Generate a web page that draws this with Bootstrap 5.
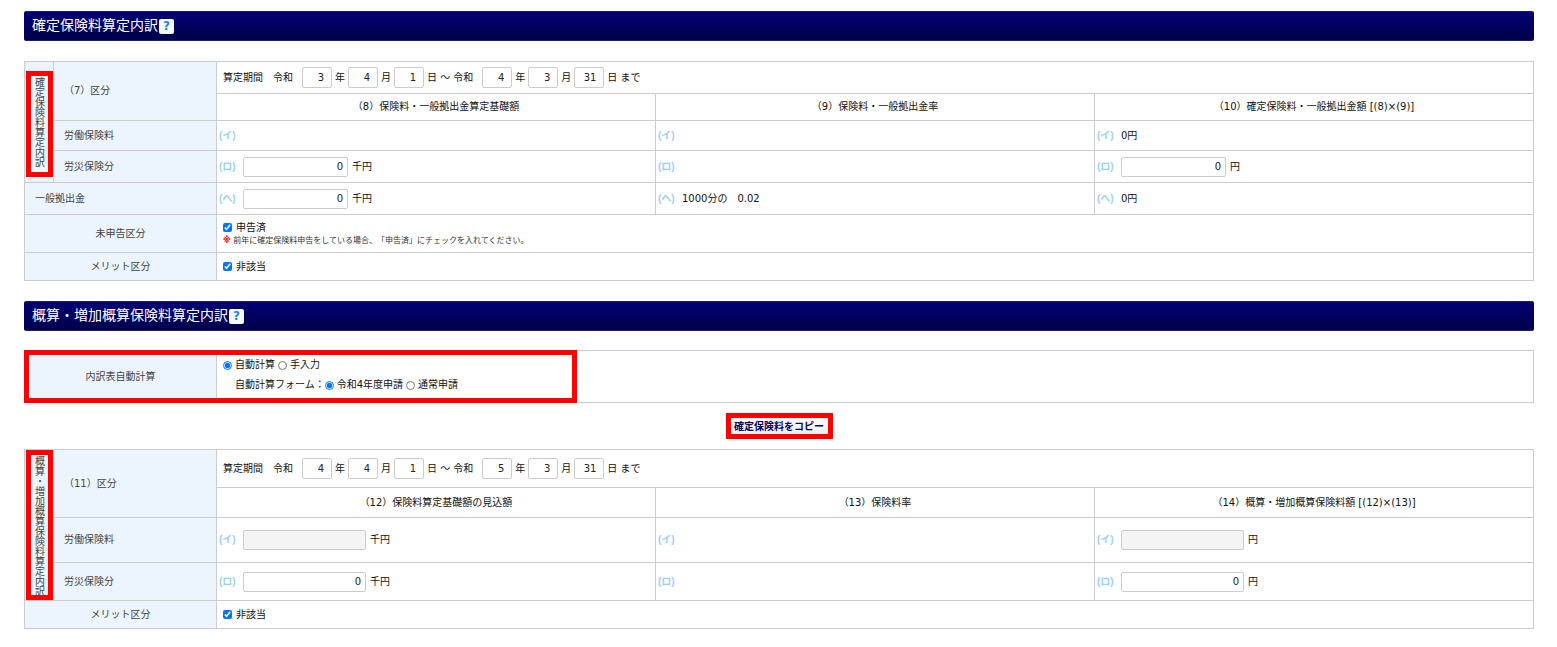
<!DOCTYPE html>
<html lang="ja">
<head>
<meta charset="utf-8">
<meta name="viewport" content="width=device-width, initial-scale=1">
<title>保険料算定内訳</title>
<link href="https://cdn.jsdelivr.net/npm/bootstrap@5.3.0/dist/css/bootstrap.min.css" rel="stylesheet">
<style>
  body { font: 10px/14px "DejaVu Sans", "Noto Sans CJK JP", sans-serif; color: #111; background: #fff; text-spacing-trim: space-all; }
  main { padding: 11px 23px 18px 24px; }
  .bar { height: 30px; padding: 0 8px 2px; gap: 1px; border-radius: 2px; background: linear-gradient(#000073, #00004b); border: 1px solid #1c1c6b; border-width: 1px 0; }
  .bar h2 { font-size: 14px; line-height: 20px; font-weight: 400; color: #fff; }
  .help { width: 15px; height: 15px; margin-top: 2px; border-radius: 2px; background: #f4f9fd; color: #2186d0; font-size: 12px; line-height: 15px; font-weight: 700; text-align: center; text-decoration: none; }
  .sheet { table-layout: fixed; color: #111; border-color: #ccc; --bs-table-color: #111; }
  .sheet > tbody > tr > * { padding: 0 6px; vertical-align: middle; font-weight: 400; }
  .sheet > tbody > tr > th[scope="row"] { background: #ecf5fd; color: #444; padding: 0 10px; }
  .sheet > tbody > tr > th[scope="col"] { text-align: center; }
  .sheet > tbody > tr > .amount { padding: 0 2px; }
  .sheet > tbody > tr > th.side[scope="row"] { padding: 0; height: 1px; }
  .c-side { width: 29px; } .c-name { width: 163px; } .c-head { width: 192px; }
  .h27 { height: 27px; } .h28 { height: 28px; } .h30 { height: 30px; } .h32 { height: 32px; }
  .h38 { height: 38px; } .h45 { height: 45px; } .h52 { height: 52px; }
  .frame { border: 5px solid #f00; }
  .upright { writing-mode: vertical-rl; width: 27px; margin: 0 auto; padding: 1px 0 5px; line-height: 17px; white-space: nowrap; text-align: start; }
  .mark-s { flex: none; width: 18px; margin-right: 6px; color: #9bcffb; font-family: "Liberation Sans", "Noto Sans CJK JP", sans-serif; font-weight: 700; white-space: nowrap; }
  .num { height: 20px; padding: 0 4px; border: 1px solid #ccc; border-radius: 2px; background: #fff; color: #222; font-size: 10px; line-height: 18px; text-align: right; }
  .num:disabled { background: #f4f4f4; }
  .num-m { width: 105px; margin-right: 4px; } .num-l { width: 123px; margin-right: 4px; }
  .num-s { width: 30px; padding: 0 7px 0 2px; height: 21px; }
  .period { gap: 3px; white-space: nowrap; }
  .era { margin-right: 6px; }
  .tick { width: 9px; height: 9px; margin: 0; accent-color: #0075ff; }
  .opt { gap: 4px; }
  .choices { gap: 3px; line-height: 20px; }
  .choices .opt { gap: 3px; }
  .note { font-size: 8px; line-height: 12px; color: #333; }
  .note b { color: #f00; }
  .auto-form { margin: 0 0 3px 12px; }
  .overlay { inset: 0 auto 0 0; width: 553px; pointer-events: none; }
  .copy { height: 26px; width: 107px; padding: 0; background: linear-gradient(#fff, #eee); color: #006; font-size: 10px; line-height: 15px; font-weight: 700; white-space: nowrap; }
  .gap-t { margin-top: 20px; } .gap-s { margin-top: 19px; } .gap-b { margin: 10px 0; }
</style>
</head>
<body>
<main>
  <section>
    <div class="bar d-flex align-items-center"><h2 class="m-0">確定保険料算定内訳</h2><a href="#" class="help">?</a></div>
    <table class="table table-bordered sheet gap-t mb-0">
      <colgroup><col class="c-side"><col class="c-name"><col><col><col></colgroup>
      <tbody>
        <tr class="h32"><th scope="row" class="side" rowspan="4"><div class="upright frame mt-1">確定保険料算定内訳</div></th>
          <th scope="row" rowspan="2">（7）区分</th>
          <td colspan="3"><div class="period d-flex align-items-center"><span class="era">算定期間　令和</span>
            <input class="num num-s" value="3" aria-label="開始年"><span>年</span><input class="num num-s" value="4" aria-label="開始月"><span>月</span><input class="num num-s" value="1" aria-label="開始日"><span class="era">日 ～ 令和</span>
            <input class="num num-s" value="4" aria-label="終了年"><span>年</span><input class="num num-s" value="3" aria-label="終了月"><span>月</span><input class="num num-s" value="31" aria-label="終了日"><span>日 まで</span></div></td></tr>
        <tr class="h27"><th scope="col">（8）保険料・一般拠出金算定基礎額</th><th scope="col">（9）保険料・一般拠出金率</th><th scope="col">（10）確定保険料・一般拠出金額 [(8)×(9)]</th></tr>
        <tr class="h30"><th scope="row">労働保険料</th>
          <td class="amount"><div class="d-flex"><span class="mark-s">(イ)</span></div></td>
          <td class="amount"><div class="d-flex"><span class="mark-s">(イ)</span></div></td>
          <td class="amount"><div class="d-flex"><span class="mark-s">(イ)</span>0円</div></td></tr>
        <tr class="h32"><th scope="row">労災保険分</th>
          <td class="amount"><div class="d-flex align-items-center"><span class="mark-s">(ロ)</span><input class="num num-m" value="0" aria-label="労災保険分 算定基礎額">千円</div></td>
          <td class="amount"><div class="d-flex"><span class="mark-s">(ロ)</span></div></td>
          <td class="amount"><div class="d-flex align-items-center"><span class="mark-s">(ロ)</span><input class="num num-m" value="0" aria-label="労災保険分 確定保険料">円</div></td></tr>
        <tr class="h32"><th scope="row" colspan="2">一般拠出金</th>
          <td class="amount"><div class="d-flex align-items-center"><span class="mark-s">(ヘ)</span><input class="num num-m" value="0" aria-label="一般拠出金 算定基礎額">千円</div></td>
          <td class="amount"><div class="d-flex"><span class="mark-s">(ヘ)</span>1000分の　0.02</div></td>
          <td class="amount"><div class="d-flex"><span class="mark-s">(ヘ)</span>0円</div></td></tr>
        <tr class="h38"><th scope="row" colspan="2" class="text-center">未申告区分</th>
          <td colspan="3"><label class="opt d-flex align-items-center"><input type="checkbox" class="tick" checked>申告済</label>
            <div class="note"><b>※</b> 前年に確定保険料申告をしている場合、「申告済」にチェックを入れてください。</div></td></tr>
        <tr class="h28"><th scope="row" colspan="2" class="text-center">メリット区分</th>
          <td colspan="3"><label class="opt d-flex align-items-center"><input type="checkbox" class="tick" checked>非該当</label></td></tr>
      </tbody>
    </table>
  </section>

  <section class="gap-t">
    <div class="bar d-flex align-items-center"><h2 class="m-0">概算・増加概算保険料算定内訳</h2><a href="#" class="help">?</a></div>
    <div class="position-relative gap-s">
      <table class="table table-bordered sheet mb-0">
        <colgroup><col class="c-head"><col></colgroup>
        <tbody>
          <tr class="h52"><th scope="row" class="text-center">内訳表自動計算</th>
            <td><div class="choices d-flex"><label class="opt d-flex align-items-center"><input type="radio" name="calc" class="tick" checked>自動計算</label><label class="opt d-flex align-items-center"><input type="radio" name="calc" class="tick">手入力</label></div>
              <div class="choices auto-form d-flex"><div class="d-flex"><span>自動計算フォーム：</span><label class="opt d-flex align-items-center"><input type="radio" name="form" class="tick" checked>令和4年度申請</label></div><label class="opt d-flex align-items-center"><input type="radio" name="form" class="tick">通常申請</label></div></td></tr>
        </tbody>
      </table>
      <div class="overlay frame position-absolute"></div>
    </div>
    <div class="d-flex justify-content-center gap-b"><button type="button" class="copy frame">確定保険料をコピー</button></div>
    <table class="table table-bordered sheet mb-0">
      <colgroup><col class="c-side"><col class="c-name"><col><col><col></colgroup>
      <tbody>
        <tr class="h38"><th scope="row" class="side" rowspan="4"><div class="upright frame h-100">概算・増加概算保険料算定内訳</div></th>
          <th scope="row" rowspan="2">（11）区分</th>
          <td colspan="3"><div class="period d-flex align-items-center"><span class="era">算定期間　令和</span>
            <input class="num num-s" value="4" aria-label="概算 開始年"><span>年</span><input class="num num-s" value="4" aria-label="概算 開始月"><span>月</span><input class="num num-s" value="1" aria-label="概算 開始日"><span class="era">日 ～ 令和</span>
            <input class="num num-s" value="5" aria-label="概算 終了年"><span>年</span><input class="num num-s" value="3" aria-label="概算 終了月"><span>月</span><input class="num num-s" value="31" aria-label="概算 終了日"><span>日 まで</span></div></td></tr>
        <tr class="h30"><th scope="col">（12）保険料算定基礎額の見込額</th><th scope="col">（13）保険料率</th><th scope="col">（14）概算・増加概算保険料額 [(12)×(13)]</th></tr>
        <tr class="h45"><th scope="row">労働保険料</th>
          <td class="amount"><div class="d-flex align-items-center"><span class="mark-s">(イ)</span><input class="num num-l" disabled aria-label="労働保険料 見込額">千円</div></td>
          <td class="amount"><div class="d-flex"><span class="mark-s">(イ)</span></div></td>
          <td class="amount"><div class="d-flex align-items-center"><span class="mark-s">(イ)</span><input class="num num-l" disabled aria-label="労働保険料 概算保険料">円</div></td></tr>
        <tr class="h38"><th scope="row">労災保険分</th>
          <td class="amount"><div class="d-flex align-items-center"><span class="mark-s">(ロ)</span><input class="num num-l" value="0" aria-label="労災保険分 見込額">千円</div></td>
          <td class="amount"><div class="d-flex"><span class="mark-s">(ロ)</span></div></td>
          <td class="amount"><div class="d-flex align-items-center"><span class="mark-s">(ロ)</span><input class="num num-l" value="0" aria-label="労災保険分 概算保険料">円</div></td></tr>
        <tr class="h28"><th scope="row" colspan="2" class="text-center">メリット区分</th>
          <td colspan="3"><label class="opt d-flex align-items-center"><input type="checkbox" class="tick" checked>非該当</label></td></tr>
      </tbody>
    </table>
  </section>
</main>
<script src="https://cdn.jsdelivr.net/npm/bootstrap@5.3.0/dist/js/bootstrap.bundle.min.js"></script>
</body>
</html>
